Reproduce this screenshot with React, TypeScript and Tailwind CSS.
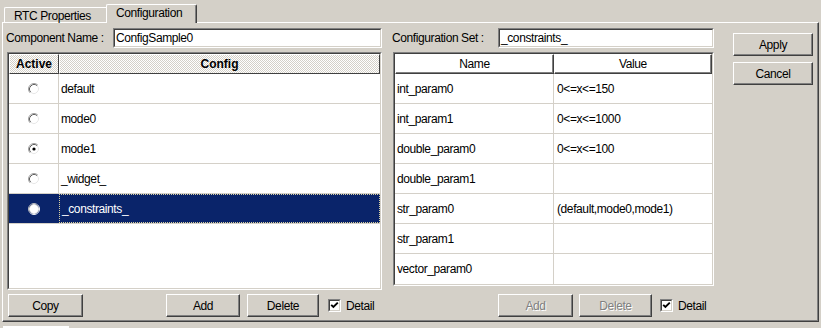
import React from "react";

const FONT = "font-['Liberation_Sans',Arial,sans-serif]";

function Radio({ checked, selected }: { checked?: boolean; selected?: boolean }) {
  return (
    <svg width="12" height="12" viewBox="0 0 12 12">
      <circle cx="6" cy="6" r="4.5" fill="#ffffff" />
      <path d="M2.11 9.89 A5.5 5.5 0 0 1 9.89 2.11" stroke={selected ? "#c0c0c0" : "#a0a0a0"} fill="none" strokeWidth="1" />
      <path d="M9.89 2.11 A5.5 5.5 0 0 1 2.11 9.89" stroke="#ffffff" fill="none" strokeWidth="1" />
      <path d="M2.82 9.18 A4.5 4.5 0 0 1 9.18 2.82" stroke={selected ? "#e0e0e0" : "#606060"} fill="none" strokeWidth="1" />
      <path d="M9.18 2.82 A4.5 4.5 0 0 1 2.82 9.18" stroke="#e8e8e8" fill="none" strokeWidth="1" />
      {checked && <circle cx="6" cy="6" r="1.6" fill="#000000" />}
    </svg>
  );
}

function Check() {
  return (
    <div className="w-[13px] h-[13px] border border-t-[#808080] border-l-[#808080] border-r-white border-b-white">
      <div className="w-full h-full border border-t-[#404040] border-l-[#404040] border-r-[#d4d0c8] border-b-[#d4d0c8] bg-white flex items-center justify-center">
        <svg width="9" height="9" viewBox="0 0 9 9">
          <path d="M1.2 3.8 L3.4 6 L7.8 1.6" stroke="#000" strokeWidth="1.9" fill="none" />
        </svg>
      </div>
    </div>
  );
}

function Btn({ children, className, disabled }: { children: React.ReactNode; className: string; disabled?: boolean }) {
  return (
    <div
      className={
        "flex items-center justify-center h-[23px] border border-t-white border-l-white border-r-[#404040] border-b-[#404040] shadow-[inset_-1px_-1px_#808080] bg-[#d4d0c8] " +
        (disabled ? "text-[#808080] [text-shadow:1px_1px_#ffffff] " : "text-black ") +
        className
      }
    >
      {children}
    </div>
  );
}

function Input({ value, className }: { value: string; className: string }) {
  return (
    <div className={"h-[20px] border border-t-[#808080] border-l-[#808080] border-r-white border-b-white " + className}>
      <div className="w-full h-full border border-t-[#404040] border-l-[#404040] border-r-[#d4d0c8] border-b-[#d4d0c8] bg-white flex items-center pl-[1px]">
        {value}
      </div>
    </div>
  );
}

function Sunken({ children, className }: { children: React.ReactNode; className: string }) {
  return (
    <div className={"border border-t-[#808080] border-l-[#808080] border-r-white border-b-white " + className}>
      <div className="w-full h-full border border-t-[#404040] border-l-[#404040] border-r-[#d4d0c8] border-b-[#d4d0c8] bg-white flex flex-col overflow-hidden">
        {children}
      </div>
    </div>
  );
}

const configs = ["default", "mode0", "mode1", "_widget_", "_constraints_"];
const params: [string, string][] = [
  ["int_param0", "0<=x<=150"],
  ["int_param1", "0<=x<=1000"],
  ["double_param0", "0<=x<=100"],
  ["double_param1", ""],
  ["str_param0", "(default,mode0,mode1)"],
  ["str_param1", ""],
  ["vector_param0", ""],
];

const checker =
  "bg-[repeating-conic-gradient(#d4d0c8_0%_25%,#ffffff_0%_50%)] bg-[length:2px_2px]";

export default function App() {
  return (
    <div className={"w-[821px] h-[328px] bg-[#d4d0c8] text-[12px] tracking-[-0.4px] text-black overflow-hidden leading-none " + FONT}>
      {/* tabs */}
      <div className="flex items-end h-[22px] pl-[4px]">
        <div className="h-[15px] w-[102px] border-t border-l border-white rounded-tl-[2px] flex items-center pl-[9px] pt-[1px]">
          RTC Properties
        </div>
        <div className="relative z-10 -mb-[1px] h-[19px] w-[91px] bg-[#d4d0c8] border-t border-l border-white border-r border-r-[#404040] shadow-[inset_-1px_0_#808080] rounded-tl-[2px] rounded-tr-[2px] flex items-center pl-[9px] pb-[2px]">
          Configuration
        </div>
      </div>

      {/* panel */}
      <div className="ml-[2px] w-[817px] h-[300px] border border-t-white border-l-white border-r-[#404040] border-b-[#404040] shadow-[inset_-1px_-1px_#808080] flex pl-[3px] pt-[5px]">
        {/* left column */}
        <div className="w-[376px] flex flex-col">
          <div className="flex items-center justify-between h-[20px]">
            <span>Component Name :</span>
            <Input value="ConfigSample0" className="w-[269px]" />
          </div>
          <Sunken className="mt-[4px] ml-[1px] w-[375px] h-[238px]">
            <div className="flex h-[20px] shrink-0 font-bold tracking-normal">
              <div className={"w-[50px] flex items-center justify-center border border-t-white border-l-white border-r-[#404040] border-b-[#404040] " + checker}>
                Active
              </div>
              <div className={"flex-1 flex items-center justify-center border border-t-white border-l-white border-r-[#404040] border-b-[#404040] " + checker}>
                Config
              </div>
            </div>
            {configs.map((c, i) => {
              const sel = i === 4;
              return (
                <div key={c} className={"flex h-[30px] shrink-0 border-b border-[#d4d0c8] " + (sel ? "bg-[#0a246a] text-white" : "")}>
                  <div className={"w-[50px] flex items-center justify-center border-r " + (sel ? "border-[#0a246a]" : "border-[#d4d0c8]")}>
                    <Radio checked={i === 2} selected={sel} />
                  </div>
                  <div className={"flex-1 flex items-center pl-[2px] " + (sel ? "border border-dotted border-[#d8d0a0]" : "")}>
                    {c}
                  </div>
                </div>
              );
            })}
          </Sunken>
          <div className="mt-[4px] flex items-center h-[23px]">
            <Btn className="ml-[2px] w-[75px]">Copy</Btn>
            <Btn className="ml-[83px] w-[74px]">Add</Btn>
            <Btn className="ml-[7px] w-[72px]">Delete</Btn>
            <div className="ml-[9px]">
              <Check />
            </div>
            <span className="ml-[5px]">Detail</span>
          </div>
        </div>

        {/* middle column */}
        <div className="ml-[10px] w-[322px] flex flex-col">
          <div className="flex items-center justify-between h-[20px]">
            <span>Configuration Set :</span>
            <Input value="_constraints_" className="w-[216px]" />
          </div>
          <Sunken className="mt-[4px] ml-[1px] w-[321px] h-[234px]">
            <div className="flex h-[20px] shrink-0">
              <div className="w-[159px] flex items-center justify-center border border-t-white border-l-white border-r-[#404040] border-b-[#404040] shadow-[inset_-1px_-1px_#808080]">
                Name
              </div>
              <div className="flex-1 flex items-center justify-center border border-t-white border-l-white border-r-[#404040] border-b-[#404040] shadow-[inset_-1px_-1px_#808080]">
                Value
              </div>
            </div>
            {params.map(([n, v], i) => (
              <div key={n} className={"flex h-[30px] shrink-0 " + (i < params.length - 1 ? "border-b border-[#d4d0c8]" : "")}>
                <div className="w-[159px] flex items-center pl-[2px] border-r border-[#d4d0c8]">{n}</div>
                <div className="flex-1 flex items-center pl-[3px]">{v}</div>
              </div>
            ))}
          </Sunken>
          <div className="mt-[8px] flex items-center h-[23px]">
            <Btn disabled className="ml-[106px] w-[75px]">Add</Btn>
            <Btn disabled className="ml-[6px] w-[73px]">Delete</Btn>
            <div className="ml-[8px]">
              <Check />
            </div>
            <span className="ml-[5px]">Detail</span>
          </div>
        </div>

        {/* right column */}
        <div className="ml-[19px] flex flex-col pt-[5px] gap-[6px]">
          <Btn className="w-[80px]">Apply</Btn>
          <Btn className="w-[80px]">Cancel</Btn>
        </div>
      </div>
      <div className="ml-[3px] mt-[4px] w-[66px] h-[2px] bg-white" />
    </div>
  );
}
